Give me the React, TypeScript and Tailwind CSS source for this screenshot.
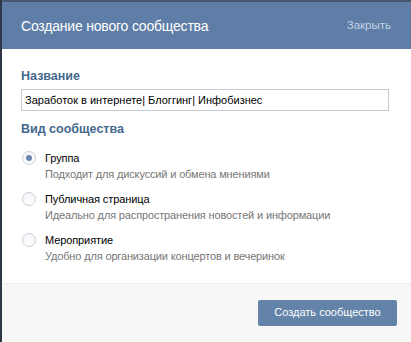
const options = [
  { title: "Группа", desc: "Подходит для дискуссий и обмена мнениями", checked: true },
  { title: "Публичная страница", desc: "Идеально для распространения новостей и информации", checked: false },
  { title: "Мероприятие", desc: "Удобно для организации концертов и вечеринок", checked: false },
];

function Radio({ checked }: { checked: boolean }) {
  return (
    <span className="flex h-[14px] w-[14px] shrink-0 items-center justify-center rounded-full border border-[#c9d0d8] bg-gradient-to-b from-[#f4f5f7] to-white">
      {checked && <span className="h-[6px] w-[6px] rounded-full bg-[#6a86ac]" />}
    </span>
  );
}

export default function App() {
  return (
    <div
      className="flex h-[342px] w-[411px] flex-col overflow-hidden border-l-2 border-[#2f3845] bg-white"
      style={{ fontFamily: '"Liberation Sans", Arial, sans-serif' }}
    >
      <div className="flex h-[49px] shrink-0 items-center justify-between border-t-2 border-[#46576f] bg-[#5e7da7] pl-[19px] pr-[20px] pt-[1px]">
        <span className="text-[14px] tracking-[-0.2px] text-white">Создание нового сообщества</span>
        <span className="text-[11.5px] text-[#c5d3e4]">Закрыть</span>
      </div>

      <div className="flex flex-1 flex-col px-[19px] pt-[19px]">
        <div className="text-[12.5px] font-bold leading-[16px] text-[#45688e]">Название</div>
        <div className="mt-[5px] flex h-[22px] w-[368px] items-center border border-[#c3cbd4] px-[3px] text-[11px] text-black">
          Заработок в интернете| Блоггинг| Инфобизнес
        </div>
        <div className="mt-[10px] text-[12.5px] font-bold leading-[17px] text-[#45688e]">Вид сообщества</div>

        <div className="mt-[12px] flex flex-col gap-[9px] pl-[1px]">
          {options.map((o) => (
            <div key={o.title} className="flex flex-col">
              <div className="flex items-center gap-[9px]">
                <Radio checked={o.checked} />
                <span className="text-[11px] leading-[16px] tracking-[-0.1px] text-black">{o.title}</span>
              </div>
              <div className="pl-[23px] text-[11px] leading-[16px] tracking-[-0.15px] text-[#777]">{o.desc}</div>
            </div>
          ))}
        </div>
      </div>

      <div className="flex h-[59px] shrink-0 items-center justify-end border-t border-[#eeeeee] bg-[#f7f7f7] pb-[1px] pr-[14px]">
        <button className="h-[26px] w-[139px] rounded-[2px] bg-[#6383a9] text-[11px] text-white">
          Создать сообщество
        </button>
      </div>
    </div>
  );
}
